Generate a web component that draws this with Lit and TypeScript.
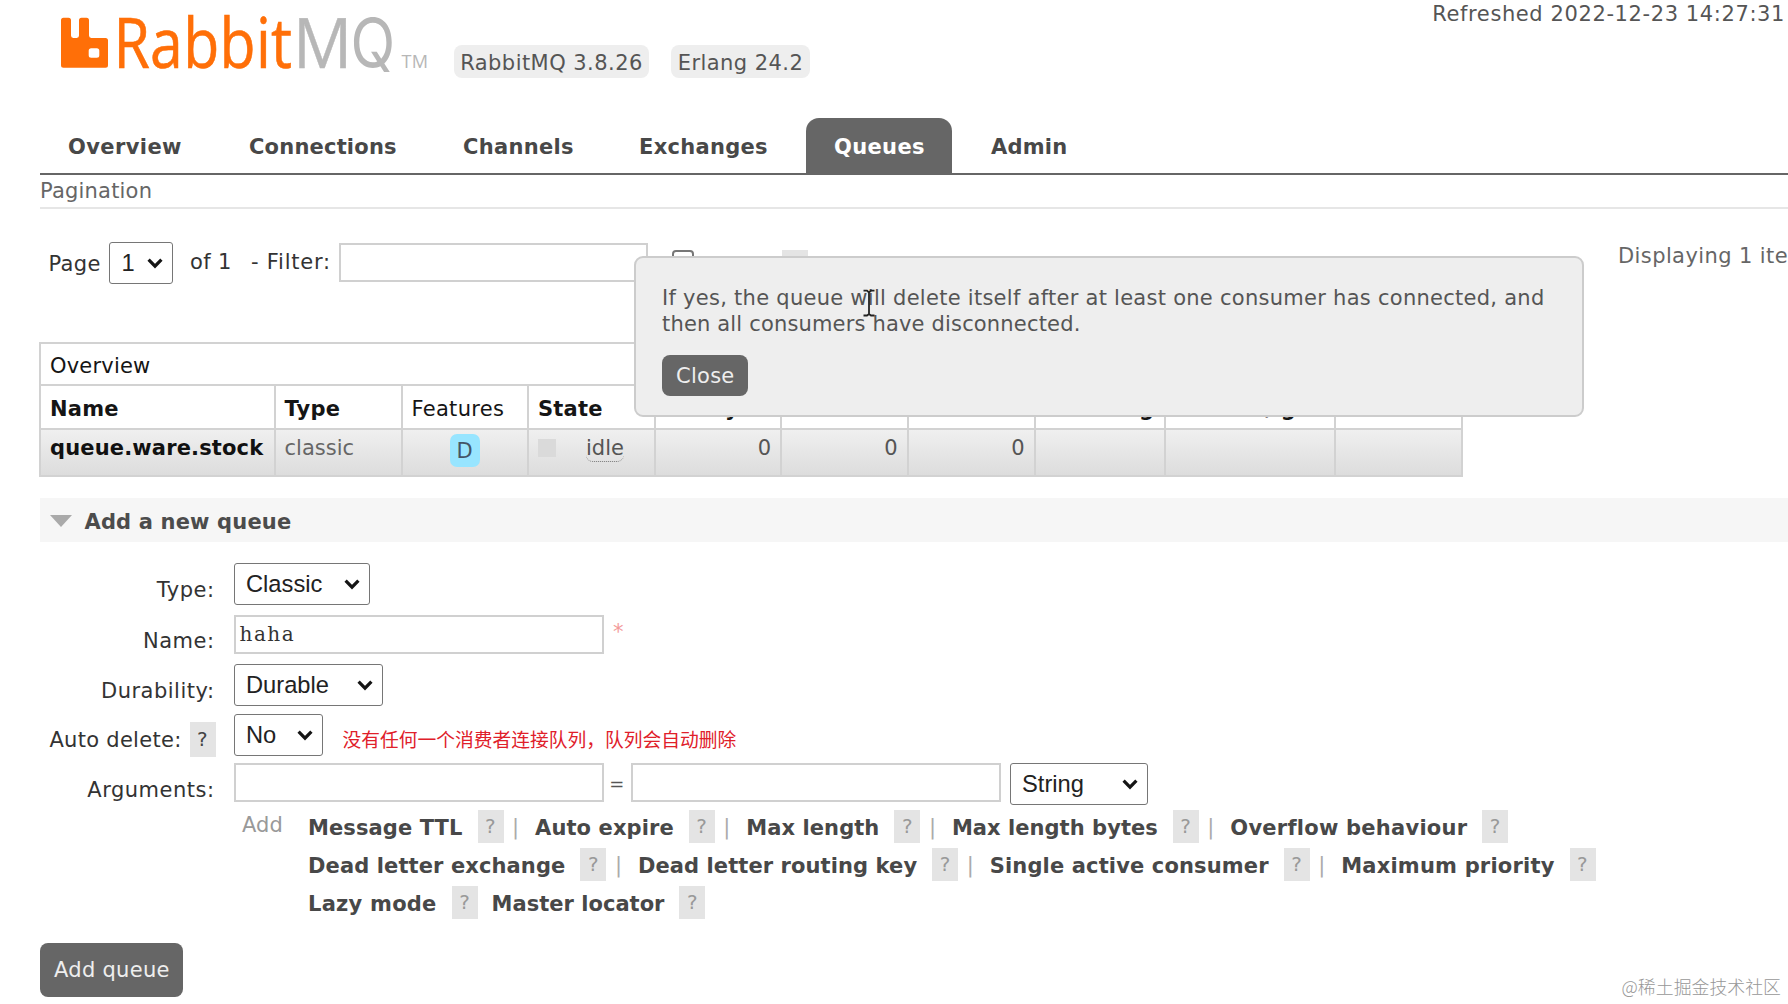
import { LitElement, html, css, svg } from "lit";
import { customElement, property } from "lit/decorators.js";
import { styleMap } from "lit/directives/style-map.js";
import { classMap } from "lit/directives/class-map.js";

/** Label plus the tracking (px) it is set with. */
type Label = [text: string, tracking: number];

const TABS: Label[] = [
  ["Overview", 0.4],
  ["Connections", 0.2],
  ["Channels", 0.3],
  ["Exchanges", 0.29],
  ["Queues", 0.35],
  ["Admin", 0.23],
];

const ARGUMENTS: Label[][] = [
  [
    ["Message TTL", 0.1],
    ["Auto expire", 0.11],
    ["Max length", 0.07],
    ["Max length bytes", 0.05],
    ["Overflow behaviour", 0.24],
  ],
  [
    ["Dead letter exchange", 0.11],
    ["Dead letter routing key", 0.09],
    ["Single active consumer", 0.14],
    ["Maximum priority", 0.2],
  ],
  [
    ["Lazy mode", 0.25],
    ["Master locator", 0.02],
  ],
];

const tracked = (v: number) => styleMap({ letterSpacing: `${v}px` });

@customElement("rabbit-logo")
class RabbitLogo extends LitElement {
  static styles = css`
    :host { display: block; width: 370px; height: 90px; }
    svg { display: block; overflow: visible; }
    .open { font-family: "Open Sans", sans-serif; }
    .inter { font-family: "Inter", sans-serif; }
  `;
  render() {
    return html`<svg width="370" height="90" viewBox="61 0 370 90">
      <path fill="#ff6f08" fill-rule="evenodd"
        d="M63.5 17.7H68.5Q71 17.7 71 20.2V35.5Q71 37.9 73.3 37.9H76.7Q79 37.9 79 35.5V20.2Q79 17.7 81.5 17.7H86.5Q89 17.7 89 20.2V35.5Q89 37.9 91.3 37.9H105.5Q108 37.9 108 40.4V65.2Q108 67.7 105.5 67.7H63.5Q61 67.7 61 65.2V20.2Q61 17.7 63.5 17.7ZM91.2 48.3Q88.7 48.3 88.7 50.8V55.2Q88.7 57.7 91.2 57.7H96.8Q99.3 57.7 99.3 55.2V50.8Q99.3 48.3 96.8 48.3Z" />
      ${svg`
        <text class="open" x="113.4" y="67.7" font-size="69" fill="#ff6f08" stroke="#ff6f08" stroke-width="0.6" textLength="179" lengthAdjust="spacingAndGlyphs">Rabbit</text>
        <text class="open" x="292.9" y="67.7" font-size="70" fill="#b7b7b7" stroke="#b7b7b7" stroke-width="0.4" textLength="59.5" lengthAdjust="spacingAndGlyphs">M</text>
        <text class="inter" x="350.5" y="67.2" font-size="67" fill="#b7b7b7" textLength="45" lengthAdjust="spacingAndGlyphs">Q</text>
        <text class="open" x="401.5" y="68" font-size="18.5" fill="#b7b7b7" textLength="27" lengthAdjust="spacingAndGlyphs">TM</text>`}
    </svg>`;
  }
}

@customElement("drop-down")
class DropDown extends LitElement {
  @property() value = "";
  static styles = css`
    :host {
      box-sizing: border-box;
      display: flex;
      flex: none;
      align-items: center;
      justify-content: space-between;
      height: 42px;
      padding: 0 9px 0 11.5px;
      border: 1.5px solid #767676;
      border-radius: 3px;
      background: #fff;
      color: #222;
      font: 23.7px/40px "Liberation Sans", Arial, sans-serif;
      letter-spacing: 0;
    }
    svg { display: block; }
  `;
  render() {
    return html`<span>${this.value}</span>
      <svg width="16" height="11" viewBox="0 0 16 11">
        <path d="M1.6 1.6L8 8.2L14.4 1.6" fill="none" stroke="#151515" stroke-width="3.2" />
      </svg>`;
  }
}

@customElement("help-mark")
class HelpMark extends LitElement {
  static styles = css`
    :host {
      display: block;
      flex: none;
      width: 26px;
      height: 33px;
      background: #e4e4e4;
      color: #999;
      font: 20px/33px "DejaVu Sans", Verdana, sans-serif;
      text-align: center;
    }
    :host([strong]) { height: 35px; line-height: 35px; color: #444; }
  `;
  render() {
    return html`?`;
  }
}

@customElement("queue-table")
class QueueTable extends LitElement {
  static styles = css`
    :host { display: block; margin-left: -1px; }
    table {
      width: 1423px;
      border-collapse: collapse;
      table-layout: fixed;
      color: #151515;
      font-size: 21px;
      line-height: 24px;
    }
    th, td {
      box-sizing: border-box;
      padding: 3px 0 0 9px;
      border: 2px solid #d2d2d2;
      text-align: left;
      font-weight: 400;
      letter-spacing: 0.2px;
      white-space: nowrap;
      overflow: hidden;
    }
    .groups { height: 42px; }
    .heads { height: 44px; }
    .heads .sort { font-weight: 700; }
    .heads .plain { letter-spacing: 0.3px; }
    .item { height: 47px; background: linear-gradient(#f0f0f0, #dcdcdc); }
    .item td { padding-top: 6px; vertical-align: top; color: #666; letter-spacing: 0; }
    .item .name { color: #111; font-weight: 700; letter-spacing: 0.15px; }
    .item .num { color: #555; text-align: right; padding-right: 9px; }
    .item .features { padding-top: 4px; padding-left: 47px; }
    .badge {
      display: block;
      width: 30px;
      height: 33px;
      border-radius: 7px;
      background: #98e5ff;
      color: #456;
      line-height: 35px;
      text-align: center;
    }
    .state { display: flex; gap: 30px; }
    .light { width: 18px; height: 18px; margin-top: 3px; background: #dadada; }
    .idle { color: #555; height: 25px; border-bottom: 1.5px dotted #777; border-radius: 7px; }
  `;
  render() {
    const widths = [234.5, 127, 126.5, 126.5, 126.5, 126.5, 127, 130, 170, 127];
    return html`<table>
      <colgroup>${widths.map((w) => html`<col style=${styleMap({ width: `${w}px` })} />`)}</colgroup>
      <tr class="groups"><th colspan="4">Overview</th><th colspan="3"></th><th colspan="3"></th></tr>
      <tr class="heads">
        <th class="sort">Name</th><th class="sort">Type</th><th class="plain">Features</th><th class="sort">State</th>
        <th class="sort">Ready</th><th class="sort">Unacked</th><th class="sort">Total</th>
        <th class="sort">incoming</th><th class="sort">deliver / get</th><th class="sort">ack</th>
      </tr>
      <tr class="item">
        <td class="name">queue.ware.stock</td>
        <td>classic</td>
        <td class="features"><span class="badge">D</span></td>
        <td><div class="state"><span class="light"></span><span class="idle">idle</span></div></td>
        <td class="num">0</td><td class="num">0</td><td class="num">0</td>
        <td></td><td></td><td></td>
      </tr>
    </table>`;
  }
}

@customElement("app-root")
class AppRoot extends LitElement {
  static styles = css`
    :host {
      display: block;
      position: relative;
      width: 1788px;
      height: 1004px;
      overflow: hidden;
      background: #fff;
      color: #555;
      font: 21px/24px "DejaVu Sans", Verdana, sans-serif;
      letter-spacing: 0.35px;
      white-space: nowrap;
    }
    * { box-sizing: border-box; }
    .page { display: flex; flex-direction: column; padding-left: 40px; }

    .header { display: flex; align-items: flex-start; height: 118px; padding-left: 21px; }
    .version {
      width: 139px;
      height: 33px;
      margin: 45px 0 0 22px;
      border-radius: 8px;
      background: #eee;
      line-height: 36px;
      text-align: center;
      letter-spacing: 0.45px;
    }
    rabbit-logo + .version { width: 195px; margin-left: 23px; }
    .refreshed { margin: 2px 0 0 auto; padding-right: 3px; letter-spacing: 0.6px; }

    .tabs {
      display: grid;
      grid-template-columns: 181px 214px 176px 195px 157px 150px;
      height: 57px;
      border-bottom: 2px solid #666;
      color: #484848;
      font-weight: 700;
    }
    .tab { padding: 3px 0 0 28px; line-height: 52px; }
    .tab.active { width: 146px; border-radius: 13px 13px 0 0; background: #666; color: #fff; }

    .subhead { height: 34px; padding-top: 4px; border-bottom: 2px solid #e6e6e6; color: #666; letter-spacing: 0.2px; }

    .pager { display: flex; align-items: flex-start; height: 133px; padding: 33px 0 0 8.5px; color: #333; }
    .pager .page-label { width: 60.5px; padding-top: 10px; }
    .pager drop-down { width: 64px; }
    .pager .count { width: 78px; padding: 8px 0 0 17px; letter-spacing: 0.4px; }
    .pager .filter { width: 88px; padding-top: 8px; letter-spacing: 0.75px; }
    .pager .field { width: 309px; margin-top: 1px; }
    .checkbox { width: 22px; height: 22px; margin: 8px 0 0 24px; border: 2px solid #777; border-radius: 4px; }
    .pager help-mark { margin: 8px 0 0 88px; }
    .displaying { width: 170px; margin: 2px 0 0 auto; overflow: hidden; color: #666; letter-spacing: 0.4px; }

    .field {
      flex: none;
      width: 370px;
      height: 39px;
      padding: 1px 4px 0;
      border: 2px solid #d0d0d0;
      background: #fff;
      color: #333;
      font: 20px/33px "DejaVu Serif", "Courier New", serif;
      letter-spacing: 1.5px;
    }

    .section {
      display: flex;
      align-items: center;
      gap: 13px;
      height: 44px;
      margin: 21px 0 21px;
      padding: 3px 0 0 9.5px;
      background: #f6f6f6;
      color: #4c4c4c;
      font-weight: 700;
      letter-spacing: 0.16px;
    }

    .row { display: flex; align-items: flex-start; height: 50px; }
    .row.short { height: 49px; }
    .row.args { height: 47px; }
    .label { display: flex; justify-content: flex-end; width: 193.5px; padding-right: 19px; color: #333; letter-spacing: 0.5px; }
    .label span { margin-top: 15px; }
    .short .label span { margin-top: 14px; }
    .label help-mark { margin: 8px 0 0 8px; }
    .label:has(help-mark) { padding-right: 18px; letter-spacing: 0.28px; }
    .type { width: 136px; }
    .durable { width: 149px; }
    .no { width: 89px; }
    .string { width: 138px; margin-left: 9px; }
    .required { margin: 5px 0 0 9.5px; color: #f39a9a; }
    .equals { width: 27px; margin-top: 9px; text-align: center; font-size: 18px; }
    .note {
      margin: 12px 0 0 20px;
      color: #e0202a;
      font: 18.75px/26px "Noto Sans CJK SC", sans-serif;
      letter-spacing: 0;
    }

    .arguments { display: flex; padding-left: 202px; }
    .add { width: 66px; margin-top: 3px; color: #999; letter-spacing: 0.1px; }
    .arg-line { display: flex; height: 38px; }
    .arg { display: flex; color: #484848; font-weight: 700; }
    .arg span { padding: 6px 15px 0 0; }
    .sep { width: 31.5px; padding: 5px 0 0 8.5px; color: #aaa; }
    .sep.blank { width: 14px; padding: 0; }

    .button {
      align-self: flex-start;
      padding: 0 14px;
      border-radius: 8px;
      background: #666;
      color: #eee;
    }
    .submit { width: 143px; height: 54px; margin-top: 19px; line-height: 55px; letter-spacing: 0.29px; }

    .popup {
      position: absolute;
      left: 634px;
      top: 256px;
      width: 950px;
      height: 161px;
      padding: 27px 26px;
      border: 2px solid #ccc;
      border-radius: 9px;
      background: #eee;
      line-height: 26px;
      letter-spacing: 0.27px;
    }
    .popup .second { letter-spacing: 0.17px; }
    .popup .button { width: 86px; height: 41px; margin-top: 18px; line-height: 42px; }
    .cursor { position: absolute; left: 862px; top: 289px; }
    .watermark {
      position: absolute;
      right: 7px;
      top: 973px;
      color: #979797;
      font: 300 17.9px/26px "Noto Sans CJK SC", sans-serif;
      letter-spacing: 0;
    }
  `;

  render() {
    return html`
      <div class="page">
        <div class="header">
          <rabbit-logo></rabbit-logo>
          <span class="version">RabbitMQ 3.8.26</span>
          <span class="version">Erlang 24.2</span>
          <span class="refreshed">Refreshed 2022-12-23 14:27:31</span>
        </div>
        <div class="tabs">
          ${TABS.map(([text, ls]) => html`<div class=${classMap({ tab: true, active: text === "Queues" })} style=${tracked(ls)}>${text}</div>`)}
        </div>
        <div class="subhead">Pagination</div>
        <div class="pager">
          <span class="page-label">Page</span>
          <drop-down value="1"></drop-down>
          <span class="count">of 1</span>
          <span class="filter">- Filter:</span>
          <div class="field"></div>
          <div class="checkbox"></div>
          <help-mark></help-mark>
          <span class="displaying">Displaying 1 item</span>
        </div>
        <queue-table></queue-table>
        <div class="section">
          <svg width="22" height="13" viewBox="0 0 22 13"><path d="M0 0H22L11 12Z" fill="#aaa" /></svg>
          <span>Add a new queue</span>
        </div>
        <div class="row" style=${styleMap({ height: "52px" })}>
          <div class="label"><span>Type:</span></div>
          <drop-down class="type" value="Classic"></drop-down>
        </div>
        <div class="row short">
          <div class="label"><span>Name:</span></div>
          <div class="field">haha</div>
          <span class="required">*</span>
        </div>
        <div class="row">
          <div class="label"><span>Durability:</span></div>
          <drop-down class="durable" value="Durable"></drop-down>
        </div>
        <div class="row short">
          <div class="label"><span>Auto delete:</span><help-mark strong></help-mark></div>
          <drop-down class="no" value="No"></drop-down>
          <span class="note">没有任何一个消费者连接队列，队列会自动删除</span>
        </div>
        <div class="row args">
          <div class="label"><span>Arguments:</span></div>
          <div class="field"></div>
          <span class="equals">=</span>
          <div class="field"></div>
          <drop-down class="string" value="String"></drop-down>
        </div>
        <div class="arguments">
          <span class="add">Add</span>
          <div>
            ${ARGUMENTS.map((line, row) => html`<div class="arg-line">
              ${line.map(([text, ls], i) => html`
                ${i ? html`<span class=${classMap({ sep: true, blank: row === 2 })}>${row === 2 ? "" : "|"}</span>` : ""}
                <div class="arg"><span style=${tracked(ls)}>${text}</span><help-mark></help-mark></div>`)}
            </div>`)}
          </div>
        </div>
        <div class="button submit">Add queue</div>
      </div>
      <div class="popup">
        <div>If yes, the queue will delete itself after at least one consumer has connected, and</div>
        <div class="second">then all consumers have disconnected.</div>
        <div class="button">Close</div>
      </div>
      <svg class="cursor" width="14" height="28" viewBox="0 0 14 28">
        <path d="M1.5 1.7H5L7 3.5L9 1.7H12.5M7 3.5V25M1.5 26.5H5L7 25L9 26.5H12.5" fill="none" stroke="#222" stroke-width="1.8" />
      </svg>
      <div class="watermark">@稀土掘金技术社区</div>
    `;
  }
}
